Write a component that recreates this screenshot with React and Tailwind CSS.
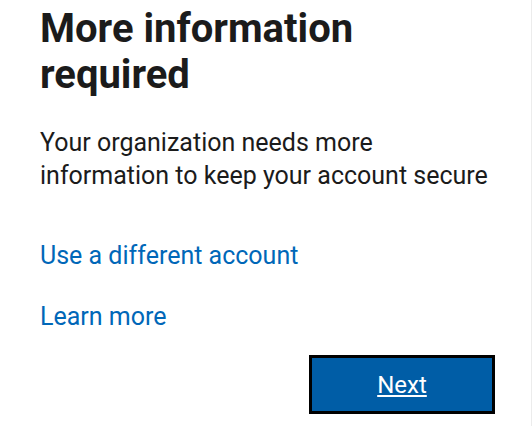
export default function App() {
  return (
    <div className="relative h-[426px] w-[532px] overflow-hidden bg-white font-['Roboto',sans-serif]">
      <div className="px-10 pt-[6px]">
        <h1 className="text-[40px] font-bold leading-[46px] text-[#1b1b1b]">
          More information
          <br />
          required
        </h1>
        <p className="mt-[28px] text-[25px] leading-[33px] text-[#1b1b1b]">
          Your organization needs more
          <br />
          information to keep your account secure
        </p>
        <div className="mt-[48px] flex flex-col items-start gap-[29px]">
          <a href="#" className="text-[25px] leading-[32px] text-[#0067b8]">
            Use a different account
          </a>
          <a href="#" className="text-[25px] leading-[32px] text-[#0067b8]">
            Learn more
          </a>
        </div>
      </div>
      <div className="mt-[22px] flex justify-end pr-[37px]">
        <button className="flex h-[59px] w-[186px] items-center justify-center border-[3px] border-black bg-[#005da6] text-[24px] text-white underline">
          Next
        </button>
      </div>
      <div className="absolute right-0 top-0 h-full w-px bg-[#ececec]" />
    </div>
  )
}
